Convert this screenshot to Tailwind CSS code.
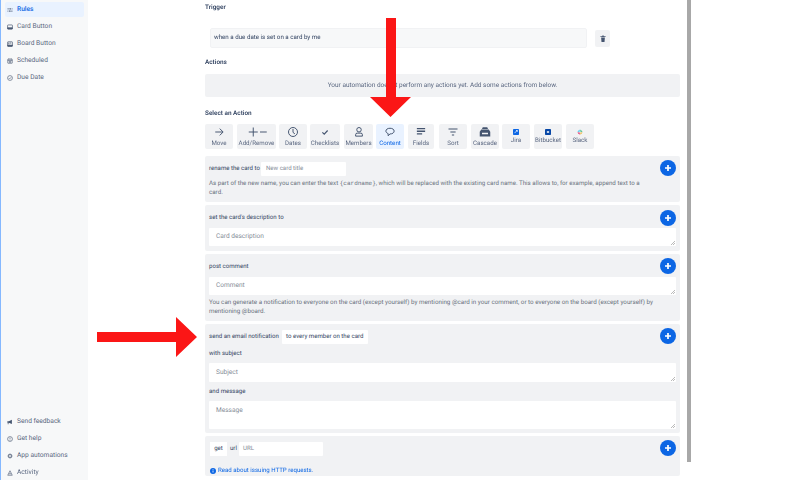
<!DOCTYPE html>
<html lang="en">
<head>
    <meta charset="UTF-8">
    <meta name="viewport" content="width=device-width, initial-scale=1.0">
    <title>Rules</title>
    <script src="https://cdn.jsdelivr.net/npm/@tailwindcss/browser@4"></script>
</head>
<body class="relative w-[800px] h-[480px] overflow-hidden bg-white flex font-['Roboto',sans-serif] text-[6.1px] text-[#5a6780] antialiased [text-rendering:geometricPrecision] blur-[0.35px]">
    <!-- sidebar -->
    <aside class="w-[88px] h-full shrink-0 bg-[#f7f8f9] border-l border-[#85b8ff] flex flex-col justify-between pt-[2px] pl-[4px] pr-[4px] text-[6.65px]">
        <nav class="flex flex-col gap-[2px]">
            <a class="h-[15px] rounded-[2px] bg-[#e9f2ff] text-[#0c66e4] font-medium flex items-center gap-[4px] pl-[2px]">
                <svg class="w-[6px] h-[6px]" viewBox="0 0 16 16" fill="none" stroke="#44546f" stroke-width="1.800"><path d="M1 5h9M13 5h2M1 11h2M6 11h9"/><path d="M10 3v4M6 9v4"/></svg>Rules</a>
            <a class="h-[15px] flex items-center gap-[4px] pl-[2px]">
                <svg class="w-[6px] h-[6px]" viewBox="0 0 16 16" fill="none" stroke="#44546f" stroke-width="1.800"><rect x="1.500" y="2.500" width="13" height="11" rx="1.500"/><path d="M2 10h12v3H2z" fill="#44546f"/></svg>Card Button</a>
            <a class="h-[15px] flex items-center gap-[4px] pl-[2px]">
                <svg class="w-[6px] h-[6px]" viewBox="0 0 16 16" fill="none" stroke="#44546f" stroke-width="1.800"><rect x="1.500" y="2" width="13" height="12" rx="1.500"/><path d="M5 4v5M10 4v3" stroke-width="2.400"/><path d="M2 11h12v3H2z" fill="#44546f"/></svg>Board Button</a>
            <a class="h-[15px] flex items-center gap-[4px] pl-[2px]">
                <svg class="w-[6px] h-[6px]" viewBox="0 0 16 16" fill="none" stroke="#44546f" stroke-width="1.600"><rect x="2" y="3" width="12" height="11" rx="1"/><path d="M2 6.500h12M5 1v3M11 1v3M5 9h6M5 11.500h6"/></svg>Scheduled</a>
            <a class="h-[15px] flex items-center gap-[4px] pl-[2px]">
                <svg class="w-[6px] h-[6px]" viewBox="0 0 16 16" fill="none" stroke="#44546f" stroke-width="1.600"><circle cx="8" cy="8" r="6.500"/><path d="M5 8.500l2 2 4-4.500"/></svg>Due Date</a>
        </nav>
        <nav class="flex flex-col gap-[2px]">
            <a class="h-[15px] flex items-center gap-[4px] pl-[2px]">
                <svg class="w-[6px] h-[6px]" viewBox="0 0 16 16" fill="#44546f"><path d="M1 6h4l8-4v11L5 10H4v4H2v-4H1z"/></svg>Send feedback</a>
            <a class="h-[15px] flex items-center gap-[4px] pl-[2px]">
                <svg class="w-[6px] h-[6px]" viewBox="0 0 16 16" fill="none" stroke="#44546f" stroke-width="1.600"><circle cx="8" cy="8" r="6.500"/><path d="M8 4v5M8 10.500v2"/></svg>Get help</a>
            <a class="h-[15px] flex items-center gap-[4px] pl-[2px]">
                <svg class="w-[6px] h-[6px]" viewBox="0 0 16 16" fill="none" stroke="#44546f" stroke-width="2"><circle cx="8" cy="8" r="4"/><path d="M8 1v3M8 12v3M1 8h3M12 8h3M3 3l2 2M11 11l2 2M13 3l-2 2M5 11l-2 2" stroke-width="1.600"/></svg>App automations</a>
            <a class="h-[15px] flex items-center gap-[4px] pl-[2px]">
                <svg class="w-[6px] h-[6px]" viewBox="0 0 16 16" fill="none" stroke="#44546f" stroke-width="1.600"><path d="M8 2L2 14h12zM5 10h6"/></svg>Activity</a>
        </nav>
    </aside>

    <!-- main column -->
    <main class="w-[475px] ml-[117px] shrink-0 pt-[2px]">
        <h3 class="h-[11px] leading-[11px] text-[6.4px] font-semibold text-[#344563]">Trigger</h3>
        <div class="flex items-center gap-[8px] mt-[15px] pl-[5px]">
            <div class="w-[377px] h-[20px] flex items-center pl-[3px] bg-[#f7f8f9] border border-[#f1f2f4] rounded-[2px] text-[6.2px] text-[#344563]">when a due date is set on a card by me</div>
            <button class="w-[15px] h-[17px] flex items-center justify-center bg-[#f1f2f4] rounded-[2px]">
                <svg class="w-[6px] h-[7px]" viewBox="0 0 16 18" fill="#44546f"><path d="M1 3h14v2H1zM6 1h4v2H6zM3 6h10l-1 12H4z"/></svg>
            </button>
        </div>
        <h3 class="h-[11px] leading-[11px] text-[6.4px] font-semibold text-[#344563] mt-[9px]">Actions</h3>
        <div class="h-[23px] mt-[6px] flex items-center justify-center bg-[#f1f2f4] rounded-[2px] text-[6.46px]">Your automation doesn't perform any actions yet. Add some actions from below.</div>
        <h3 class="h-[11px] leading-[11px] text-[6.4px] font-semibold text-[#344563] mt-[11px]">Select an Action</h3>

        <!-- action tiles -->
        <div class="flex mt-[5px] h-[25px] text-center text-[6.2px]">
            <div class="w-[28px] bg-[#f1f2f4] rounded-[2px] flex flex-col items-center pt-[2px]">
                <svg class="w-[12px] h-[12px]" viewBox="0 0 16 16" fill="none" stroke="#44546f" stroke-width="1.300"><path d="M3 8h10M9 3.500l4.500 4.500-4.500 4.500"/></svg><span class="mt-[1px]">Move</span></div>
            <div class="w-[39px] ml-[4px] bg-[#f1f2f4] rounded-[2px] flex flex-col items-center pt-[2px]">
                <svg class="w-[20px] h-[12px]" viewBox="0 0 26 16" fill="none" stroke="#44546f" stroke-width="1.300"><path d="M2 8h12M8 2v12M17 8h9"/></svg><span class="mt-[1px] whitespace-nowrap">Add/Remove</span></div>
            <div class="w-[28px] ml-[3px] bg-[#f1f2f4] rounded-[2px] flex flex-col items-center pt-[2px]">
                <svg class="w-[12px] h-[12px]" viewBox="0 0 16 16" fill="none" stroke="#44546f" stroke-width="1.300"><circle cx="8" cy="8" r="6"/><path d="M8 4v4.500l2.500 2"/></svg><span class="mt-[1px]">Dates</span></div>
            <div class="w-[30px] ml-[3px] bg-[#f1f2f4] rounded-[2px] flex flex-col items-center pt-[2px]">
                <svg class="w-[12px] h-[12px]" viewBox="0 0 16 16" fill="none" stroke="#44546f" stroke-width="1.500"><path d="M4.500 8.500l2.500 2.500 4.500-5"/></svg><span class="mt-[1px]">Checklists</span></div>
            <div class="w-[29px] ml-[4px] bg-[#f1f2f4] rounded-[2px] flex flex-col items-center pt-[2px]">
                <svg class="w-[12px] h-[12px]" viewBox="0 0 16 16" fill="none" stroke="#44546f" stroke-width="1.300"><circle cx="8" cy="5" r="3"/><path d="M3.500 13.500v-2a2 2 0 0 1 2-2h5a2 2 0 0 1 2 2v2z"/></svg><span class="mt-[1px]">Members</span></div>
            <div class="w-[28px] ml-[3px] bg-[#e9f2ff] text-[#0c66e4] rounded-[2px] flex flex-col items-center pt-[2px]">
                <svg class="w-[12px] h-[12px]" viewBox="0 0 16 16" fill="none" stroke="#44546f" stroke-width="1.300"><path d="M8 3c3.300 0 5.500 1.600 5.500 3.800s-2.200 3.800-5.500 3.800l-2.500 2.400v-2.900c-1.800-.6-3-1.900-3-3.300C2.500 4.600 4.700 3 8 3z"/></svg><span class="mt-[1px]">Content</span></div>
            <div class="w-[26px] ml-[4px] bg-[#f1f2f4] rounded-[2px] flex flex-col items-center pt-[2px]">
                <svg class="w-[12px] h-[12px]" viewBox="0 0 16 16" fill="none" stroke="#44546f" stroke-width="1.700"><path d="M2.500 3.500h11M2.500 7h11M2.500 10.500h7"/></svg><span class="mt-[1px]">Fields</span></div>
            <div class="w-[28px] ml-[5px] bg-[#f1f2f4] rounded-[2px] flex flex-col items-center pt-[2px]">
                <svg class="w-[12px] h-[12px]" viewBox="0 0 16 16" fill="none" stroke="#44546f" stroke-width="1.500"><path d="M2 4h12M4.500 8h7M6.500 12h3"/></svg><span class="mt-[1px]">Sort</span></div>
            <div class="w-[28px] ml-[4px] bg-[#f1f2f4] rounded-[2px] flex flex-col items-center pt-[2px]">
                <svg class="w-[12px] h-[12px]" viewBox="0 0 16 16" fill="#44546f"><path d="M5 1.500h6l1 2.500H4zM3 4.500h10l2 3v6.500H1V7.500zM4 9v2h8V9z"/></svg><span class="mt-[1px]">Cascade</span></div>
            <div class="w-[28px] ml-[3px] bg-[#f1f2f4] rounded-[2px] flex flex-col items-center pt-[5px]">
                <svg class="w-[6px] h-[6px]" viewBox="0 0 16 16"><rect width="16" height="16" rx="2" fill="#0c66e4"/><path d="M4 11l7-7M8 4h3.500v3.500" stroke="#fff" stroke-width="2" fill="none"/></svg><span class="mt-[1px]">Jira</span></div>
            <div class="w-[28px] ml-[4px] bg-[#f1f2f4] rounded-[2px] flex flex-col items-center pt-[5px]">
                <svg class="w-[6px] h-[6px]" viewBox="0 0 16 16"><rect width="16" height="16" rx="2" fill="#0747a6"/><rect x="5" y="6" width="6" height="4" fill="#fff"/></svg><span class="mt-[1px]">Bitbucket</span></div>
            <div class="w-[28px] ml-[4px] bg-[#f1f2f4] rounded-[2px] flex flex-col items-center pt-[5px]">
                <svg class="w-[6px] h-[6px]" viewBox="0 0 16 16"><path d="M7 1v6H1z" fill="#36c5f0"/><path d="M9 1l6 6H9z" fill="#2eb67d"/><path d="M7 15l-6-6h6z" fill="#e01e5a"/><path d="M9 15V9h6z" fill="#ecb22e"/></svg><span class="mt-[1px]">Slack</span></div>
        </div>

        <!-- action cards -->
        <div class="flex flex-col gap-[3px] mt-[7px]">
            <section class="relative h-[46px] bg-[#f1f2f4] rounded-[2px] pt-[6px] px-[4px]">
                <div class="flex items-center gap-[1px] h-[14px]"><span class="text-[#344563]">rename the card to</span>
                    <div class="w-[85px] h-[14px] bg-white rounded-[1px] pl-[5px] flex items-center text-[#858c97]">New card title</div></div>
                <p class="mt-[3px] leading-[9px] text-[6.2px] text-[#6b7380] w-[436px]">As part of the new name, you can enter the text <span class="font-['Liberation_Mono',monospace] text-[6px]">{cardname}</span>, which will be replaced with the existing card name. This allows to, for example, append text to a card.</p>
                <button class="absolute right-[4px] top-[4px] w-[16px] h-[16px] rounded-full bg-[#0c66e4] flex items-center justify-center">
                    <svg class="w-[8px] h-[8px]" viewBox="0 0 8 8" stroke="#fff" stroke-width="1.700"><path d="M4 1v6M1 4h6"/></svg></button>
            </section>
            <section class="relative h-[46px] bg-[#f1f2f4] rounded-[2px] pt-[8px] px-[4px]">
                <div class="h-[10px] leading-[10px] text-[#344563]">set the card's description to</div>
                <div class="relative mt-[5px] h-[18px] bg-white rounded-[1px] pl-[7px] flex items-center text-[6.55px] text-[#858c97]">Card description
                    <svg class="absolute right-[1px] bottom-[1px] w-[4px] h-[4px]" viewBox="0 0 4 4" stroke="#777" stroke-width=".5"><path d="M4 0L0 4M4 2L2 4"/></svg></div>
                <button class="absolute right-[4px] top-[5px] w-[16px] h-[16px] rounded-full bg-[#0c66e4] flex items-center justify-center">
                    <svg class="w-[8px] h-[8px]" viewBox="0 0 8 8" stroke="#fff" stroke-width="1.700"><path d="M4 1v6M1 4h6"/></svg></button>
            </section>
            <section class="relative h-[67px] bg-[#f1f2f4] rounded-[2px] pt-[8px] px-[4px]">
                <div class="h-[10px] leading-[10px] text-[#344563]">post comment</div>
                <div class="relative mt-[5px] h-[18px] bg-white rounded-[1px] pl-[7px] flex items-center text-[6.55px] text-[#858c97]">Comment
                    <svg class="absolute right-[1px] bottom-[1px] w-[4px] h-[4px]" viewBox="0 0 4 4" stroke="#777" stroke-width=".5"><path d="M4 0L0 4M4 2L2 4"/></svg></div>
                <p class="mt-[3px] leading-[9px] text-[6.25px] text-[#6b7380] w-[445px]">You can generate a notification to everyone on the card (except yourself) by mentioning @card in your comment, or to everyone on the board (except yourself) by mentioning @board.</p>
                <button class="absolute right-[4px] top-[4px] w-[16px] h-[16px] rounded-full bg-[#0c66e4] flex items-center justify-center">
                    <svg class="w-[8px] h-[8px]" viewBox="0 0 8 8" stroke="#fff" stroke-width="1.700"><path d="M4 1v6M1 4h6"/></svg></button>
            </section>
            <section class="relative h-[109px] bg-[#f1f2f4] rounded-[2px] pt-[6px] px-[4px]">
                <div class="flex items-center gap-[3px] h-[14px]"><span class="text-[#344563]">send an email notification</span>
                    <div class="w-[86px] h-[14px] bg-white rounded-[1px] flex items-center justify-center text-[#344563]">to every member on the card</div></div>
                <div class="h-[9px] leading-[9px] mt-[5px] text-[#344563]">with subject</div>
                <div class="relative mt-[5px] h-[19px] bg-white rounded-[1px] pl-[7px] flex items-center text-[6.55px] text-[#858c97]">Subject
                    <svg class="absolute right-[1px] bottom-[1px] w-[4px] h-[4px]" viewBox="0 0 4 4" stroke="#777" stroke-width=".5"><path d="M4 0L0 4M4 2L2 4"/></svg></div>
                <div class="h-[9px] leading-[9px] mt-[5px] text-[#344563]">and message</div>
                <div class="relative mt-[5px] h-[28px] bg-white rounded-[1px] pl-[7px] pt-[5px] text-[6.55px] text-[#858c97]">Message
                    <svg class="absolute right-[1px] bottom-[1px] w-[4px] h-[4px]" viewBox="0 0 4 4" stroke="#777" stroke-width=".5"><path d="M4 0L0 4M4 2L2 4"/></svg></div>
                <button class="absolute right-[4px] top-[4px] w-[16px] h-[16px] rounded-full bg-[#0c66e4] flex items-center justify-center">
                    <svg class="w-[8px] h-[8px]" viewBox="0 0 8 8" stroke="#fff" stroke-width="1.700"><path d="M4 1v6M1 4h6"/></svg></button>
            </section>
            <section class="relative h-[40px] bg-[#f1f2f4] rounded-[2px] pt-[6px] px-[5px]">
                <div class="flex items-center h-[14px]">
                    <div class="w-[17px] h-[14px] bg-white flex items-center justify-center text-[#344563]">get</div>
                    <span class="w-[9px] ml-[3px] text-[#344563]">url</span>
                    <div class="w-[84px] h-[14px] bg-white rounded-[1px] pl-[4px] flex items-center text-[#858c97]">URL</div>
                </div>
                <div class="flex items-center gap-[2px] mt-[10px] text-[#0c66e4]">
                    <svg class="w-[6px] h-[6px]" viewBox="0 0 6 6"><circle cx="3" cy="3" r="3" fill="#0c66e4"/><path d="M3 2.500v2M3 1.200v.7" stroke="#fff" stroke-width=".8"/></svg>Read about issuing HTTP requests.</div>
                <button class="absolute right-[4px] top-[4px] w-[16px] h-[16px] rounded-full bg-[#0c66e4] flex items-center justify-center">
                    <svg class="w-[8px] h-[8px]" viewBox="0 0 8 8" stroke="#fff" stroke-width="1.700"><path d="M4 1v6M1 4h6"/></svg></button>
            </section>
        </div>
    </main>

    <!-- scrollbar thumb -->
    <div class="absolute left-[687px] top-0 w-[4px] h-[462px] bg-[#a8a8a8]"></div>

    <!-- annotation arrows -->
    <svg class="absolute left-[370px] top-[18px] w-[41px] h-[99px]" viewBox="0 0 41 99" fill="#fb1616"><path d="M16 0h10v79h15L20.500 99 0 79h16z"/></svg>
    <svg class="absolute left-[97px] top-[317px] w-[100px] h-[40px]" viewBox="0 0 100 40" fill="#fb1616"><path d="M0 15h79V0l21 20-21 20V25H0z"/></svg>
</body>
</html>
